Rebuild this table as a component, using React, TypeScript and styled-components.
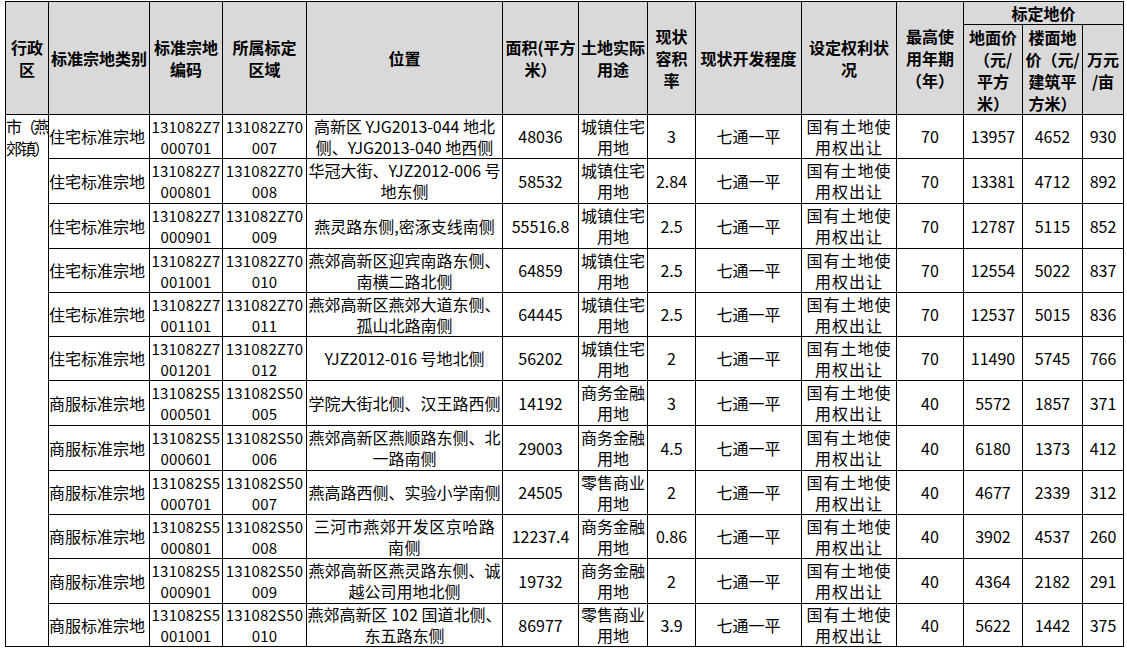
import React from "react";
import styled, { createGlobalStyle } from "styled-components";

const Global = createGlobalStyle`
  html, body { margin: 0; padding: 0; background: #ffffff; }
  body { font-family: "Noto Sans CJK SC", "Noto Sans", sans-serif; color: #000; }
`;

const Page = styled.div`
  padding: 1px 0 0 5px;
`;

const Table = styled.table`
  border-collapse: collapse;
  table-layout: fixed;
  width: 1119px;
  font-size: 16px;
`;

const HeadCell = styled.th<{ $h?: number }>`
  background: #d9d9d9;
  border: 1px solid #000;
  padding: 0;
  font-weight: 700;
  text-align: center;
  vertical-align: middle;
  line-height: 22px;
  white-space: nowrap;
  overflow: hidden;
  height: ${(p) => (p.$h ? `${p.$h}px` : "auto")};
`;

const Cell = styled.td<{ $align?: "left" | "center"; $spacing?: number }>`
  border: 1px solid #000;
  padding: 0;
  text-align: ${(p) => p.$align || "center"};
  vertical-align: middle;
  line-height: 21px;
  white-space: nowrap;
  overflow: hidden;
  letter-spacing: ${(p) => (p.$spacing ? `${p.$spacing}px` : "0")};
`;

const CodeCell = styled.td`
  border: 1px solid #000;
  padding: 0;
  text-align: center;
  vertical-align: middle;
  line-height: 21px;
  font-size: 15px;
  letter-spacing: 0.2px;
  white-space: nowrap;
  overflow: hidden;
`;

const DistrictCell = styled.td`
  border: 1px solid #000;
  padding: 0;
  vertical-align: top;
  text-align: left;
  line-height: 22px;
  letter-spacing: -2px;
  white-space: nowrap;
  overflow: hidden;
`;

const Line = styled.span`
  display: block;
`;

const BodyRow = styled.tr<{ $h: number }>`
  height: ${(p) => p.$h}px;
`;

const Lines = ({ items }: { items: string[] }) => (
  <>
    {items.map((t, i) => (
      <Line key={i}>{t}</Line>
    ))}
  </>
);

const widths = [43, 101, 73, 84, 196, 76, 69, 48, 106, 95, 67, 59, 60, 41];

type Row = {
  type: string;
  code: string[];
  zone: string[];
  loc: string[];
  locSpacing?: number;
  area: string;
  use: string[];
  far: string;
  years: string;
  land: string;
  floor: string;
  mu: string;
  h: number;
};

const rows: Row[] = [
  { type: "住宅标准宗地", code: ["131082Z7", "000701"], zone: ["131082Z70", "007"], loc: ["高新区 YJG2013-044 地北", "侧、YJG2013-040 地西侧"], area: "48036", use: ["城镇住宅", "用地"], far: "3", years: "70", land: "13957", floor: "4652", mu: "930", h: 44 },
  { type: "住宅标准宗地", code: ["131082Z7", "000801"], zone: ["131082Z70", "008"], loc: ["华冠大街、YJZ2012-006 号", "地东侧"], area: "58532", use: ["城镇住宅", "用地"], far: "2.84", years: "70", land: "13381", floor: "4712", mu: "892", h: 45 },
  { type: "住宅标准宗地", code: ["131082Z7", "000901"], zone: ["131082Z70", "009"], loc: ["燕灵路东侧,密涿支线南侧"], area: "55516.8", use: ["城镇住宅", "用地"], far: "2.5", years: "70", land: "12787", floor: "5115", mu: "852", h: 45 },
  { type: "住宅标准宗地", code: ["131082Z7", "001001"], zone: ["131082Z70", "010"], loc: ["燕郊高新区迎宾南路东侧、", "南横二路北侧"], area: "64859", use: ["城镇住宅", "用地"], far: "2.5", years: "70", land: "12554", floor: "5022", mu: "837", h: 44 },
  { type: "住宅标准宗地", code: ["131082Z7", "001101"], zone: ["131082Z70", "011"], loc: ["燕郊高新区燕郊大道东侧、", "孤山北路南侧"], area: "64445", use: ["城镇住宅", "用地"], far: "2.5", years: "70", land: "12537", floor: "5015", mu: "836", h: 44 },
  { type: "住宅标准宗地", code: ["131082Z7", "001201"], zone: ["131082Z70", "012"], loc: ["YJZ2012-016 号地北侧"], area: "56202", use: ["城镇住宅", "用地"], far: "2", years: "70", land: "11490", floor: "5745", mu: "766", h: 44 },
  { type: "商服标准宗地", code: ["131082S5", "000501"], zone: ["131082S50", "005"], loc: ["学院大街北侧、汉王路西侧"], area: "14192", use: ["商务金融", "用地"], far: "3", years: "40", land: "5572", floor: "1857", mu: "371", h: 45 },
  { type: "商服标准宗地", code: ["131082S5", "000601"], zone: ["131082S50", "006"], loc: ["燕郊高新区燕顺路东侧、北", "一路南侧"], area: "29003", use: ["商务金融", "用地"], far: "4.5", years: "40", land: "6180", floor: "1373", mu: "412", h: 45 },
  { type: "商服标准宗地", code: ["131082S5", "000701"], zone: ["131082S50", "007"], loc: ["燕高路西侧、实验小学南侧"], area: "24505", use: ["零售商业", "用地"], far: "2", years: "40", land: "4677", floor: "2339", mu: "312", h: 44 },
  { type: "商服标准宗地", code: ["131082S5", "000801"], zone: ["131082S50", "008"], loc: ["三河市燕郊开发区京哈路", "南侧"], locSpacing: 0.5, area: "12237.4", use: ["商务金融", "用地"], far: "0.86", years: "40", land: "3902", floor: "4537", mu: "260", h: 44 },
  { type: "商服标准宗地", code: ["131082S5", "000901"], zone: ["131082S50", "009"], loc: ["燕郊高新区燕灵路东侧、诚", "越公司用地北侧"], area: "19732", use: ["商务金融", "用地"], far: "2", years: "40", land: "4364", floor: "2182", mu: "291", h: 45 },
  { type: "商服标准宗地", code: ["131082S5", "001001"], zone: ["131082S50", "010"], loc: ["燕郊高新区 102 国道北侧、", "东五路东侧"], area: "86977", use: ["零售商业", "用地"], far: "3.9", years: "40", land: "5622", floor: "1442", mu: "375", h: 41 },
];

export default function App() {
  return (
    <Page>
      <Global />
      <Table>
        <colgroup>
          {widths.map((w, i) => (
            <col key={i} style={{ width: w }} />
          ))}
        </colgroup>
        <thead>
          <tr>
            <HeadCell rowSpan={2} $h={22}><Lines items={["行政", "区"]} /></HeadCell>
            <HeadCell rowSpan={2}>标准宗地类别</HeadCell>
            <HeadCell rowSpan={2}><Lines items={["标准宗地", "编码"]} /></HeadCell>
            <HeadCell rowSpan={2}><Lines items={["所属标定", "区域"]} /></HeadCell>
            <HeadCell rowSpan={2}>位置</HeadCell>
            <HeadCell rowSpan={2}><Lines items={["面积(平方", "米）"]} /></HeadCell>
            <HeadCell rowSpan={2}><Lines items={["土地实际", "用途"]} /></HeadCell>
            <HeadCell rowSpan={2}><Lines items={["现状", "容积", "率"]} /></HeadCell>
            <HeadCell rowSpan={2}>现状开发程度</HeadCell>
            <HeadCell rowSpan={2}><Lines items={["设定权利状", "况"]} /></HeadCell>
            <HeadCell rowSpan={2}><Lines items={["最高使", "用年期", "（年）"]} /></HeadCell>
            <HeadCell colSpan={3}>标定地价</HeadCell>
          </tr>
          <tr>
            <HeadCell $h={89}><Lines items={["地面价", "（元/", "平方", "米）"]} /></HeadCell>
            <HeadCell><Lines items={["楼面地", "价（元/", "建筑平", "方米）"]} /></HeadCell>
            <HeadCell><Lines items={["万元", "/亩"]} /></HeadCell>
          </tr>
        </thead>
        <tbody>
          {rows.map((r, i) => (
            <BodyRow key={i} $h={r.h}>
              {i === 0 && (
                <DistrictCell rowSpan={rows.length}>
                  <Lines items={["市（燕", "郊镇）"]} />
                </DistrictCell>
              )}
              <Cell $align="left">{r.type}</Cell>
              <CodeCell><Lines items={r.code} /></CodeCell>
              <CodeCell><Lines items={r.zone} /></CodeCell>
              <Cell $spacing={r.locSpacing}><Lines items={r.loc} /></Cell>
              <Cell>{r.area}</Cell>
              <Cell><Lines items={r.use} /></Cell>
              <Cell>{r.far}</Cell>
              <Cell>七通一平</Cell>
              <Cell $spacing={1}><Lines items={["国有土地使", "用权出让"]} /></Cell>
              <Cell>{r.years}</Cell>
              <Cell>{r.land}</Cell>
              <Cell>{r.floor}</Cell>
              <Cell>{r.mu}</Cell>
            </BodyRow>
          ))}
        </tbody>
      </Table>
    </Page>
  );
}
